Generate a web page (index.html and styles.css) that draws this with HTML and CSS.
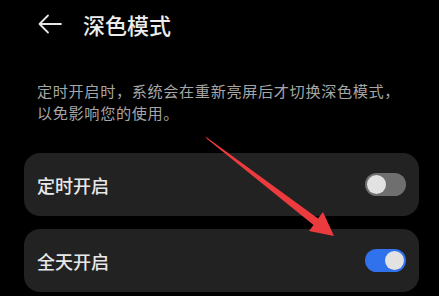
FILE: index.html
```html
<!DOCTYPE html>
<html lang="zh-CN">
<head>
<meta charset="utf-8">
<link rel="stylesheet" href="styles.css">
</head>
<body>
<div class="page">
  <header class="header">
    <svg class="back" width="24" height="20" viewBox="0 0 24 20">
      <path d="M10 1.5 L1.5 10 L10 18.5 M1.5 10 H23" fill="none" stroke="#e6e6e6" stroke-width="1.8" stroke-linecap="round" stroke-linejoin="round"/>
    </svg>
    <h1 class="title">深色模式</h1>
  </header>
  <p class="desc">定时开启时，系统会在重新亮屏后才切换深色模式，<br>以免影响您的使用。</p>
  <div class="cards">
    <div class="card">
      <span class="label">定时开启</span>
      <span class="toggle off"><span class="knob"></span></span>
    </div>
    <div class="card">
      <span class="label">全天开启</span>
      <span class="toggle on"><span class="knob"></span></span>
    </div>
  </div>
  <svg class="annot" width="439" height="296" viewBox="0 0 439 296">
    <polygon points="205.5,136.5 318,218.5 323,212 334,236 309,231 313.5,225 206.5,138.5" fill="#ec3b3f"/>
  </svg>
</div>
</body>
</html>
```

FILE: styles.css
```css
html, body {
  margin: 0;
  padding: 0;
  background: #000;
}
body {
  width: 439px;
  height: 296px;
  overflow: hidden;
  font-family: "Noto Sans CJK SC", "Noto Sans", sans-serif;
}
.page {
  position: relative;
  width: 439px;
  height: 296px;
}
.header {
  display: flex;
  align-items: center;
  height: 48px;
  padding-left: 38px;
}
.back {
  display: block;
}
.title {
  margin: 0 0 0 21px;
  font-size: 22px;
  font-weight: 500;
  color: #ececec;
  line-height: 1;
}
.desc {
  margin: 31px 0 0 0;
  padding-left: 37px;
  font-size: 15.2px;
  letter-spacing: 0.6px;
  line-height: 22px;
  color: #a6a6a6;
}
.cards {
  display: flex;
  flex-direction: column;
  gap: 13px;
  margin: 30px 20px 0 24px;
}
.card {
  display: flex;
  align-items: center;
  justify-content: space-between;
  height: 63px;
  border-radius: 16px;
  background: #222222;
  padding: 0 13px 0 13px;
}
.label {
  font-size: 18px;
  font-weight: 500;
  color: #e8e8e8;
}
.toggle {
  width: 41px;
  height: 23px;
  border-radius: 12px;
  display: flex;
  align-items: center;
}
.toggle.off {
  background: #6f6f6f;
  justify-content: flex-start;
}
.toggle.on {
  background: #2f72ec;
  justify-content: flex-end;
}
.knob {
  width: 19px;
  height: 19px;
  margin: 0 2px;
  border-radius: 50%;
  background: #e2e2e2;
}
.annot {
  position: absolute;
  left: 0;
  top: 0;
  pointer-events: none;
}
```
